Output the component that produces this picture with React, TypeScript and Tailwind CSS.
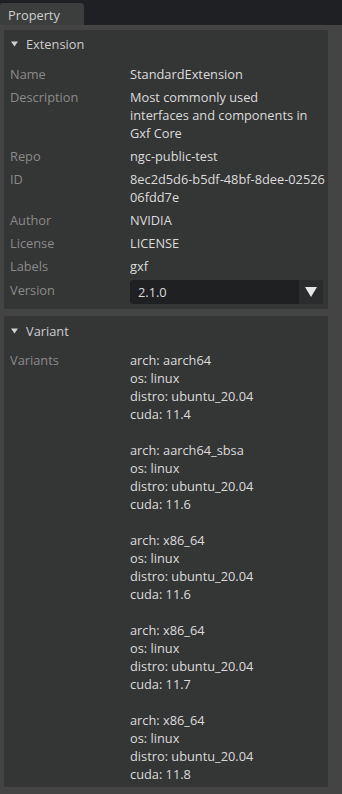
const rows: { label: string; value: string[] }[] = [
  { label: "Name", value: ["StandardExtension"] },
  { label: "Description", value: ["Most commonly used", "interfaces and components in", "Gxf Core"] },
  { label: "Repo", value: ["ngc-public-test"] },
  { label: "ID", value: ["8ec2d5d6-b5df-48bf-8dee-02526", "06fdd7e"] },
  { label: "Author", value: ["NVIDIA"] },
  { label: "License", value: ["LICENSE"] },
  { label: "Labels", value: ["gxf"] },
];

const variants = [
  { arch: "aarch64", cuda: "11.4" },
  { arch: "aarch64_sbsa", cuda: "11.6" },
  { arch: "x86_64", cuda: "11.6" },
  { arch: "x86_64", cuda: "11.7" },
  { arch: "x86_64", cuda: "11.8" },
];

const Caret = () => (
  <svg width="7" height="6" viewBox="0 0 7 6" className="shrink-0">
    <path d="M0 0.5 H7 L3.5 5.5 Z" fill="#cfcfcf" />
  </svg>
);

const Header = ({ title }: { title: string }) => (
  <div className="flex items-center gap-[8px] pl-[7px] h-[18px] text-[#cdcdcd]">
    <Caret />
    <span>{title}</span>
  </div>
);

export default function App() {
  return (
    <div
      className="w-[342px] h-[794px] bg-[#444444] overflow-hidden text-[12.8px] leading-[18px]"
      style={{ fontFamily: '"Open Sans", "Noto Sans", sans-serif' }}
    >
      <div className="h-[25px] bg-[#1f2023] flex items-end">
        <div className="h-[22px] w-[84px] bg-[#3c3d3d] rounded-tr-[4px] rounded-tl-[2px] pl-[8px] pt-[2px] flex items-center text-[#cfcfcf]">
          Property
        </div>
      </div>

      <div className="pl-[4px] pr-[14px] pt-[5px] flex flex-col gap-[7px]">
        {/* Extension */}
        <div className="bg-[#343535] rounded-[2px] pt-[5px] pb-[5px]">
          <Header title="Extension" />
          <div className="mt-[12px] flex flex-col gap-[5px]">
            {rows.map((r) => (
              <div key={r.label} className="flex">
                <div className="w-[126px] pl-[6px] text-[#8b8b8b] shrink-0">{r.label}</div>
                <div className="text-[#dcdcdc] whitespace-nowrap">
                  {r.value.map((v, i) => (
                    <div key={i}>{v}</div>
                  ))}
                </div>
              </div>
            ))}
            <div className="flex items-start">
              <div className="w-[126px] pl-[6px] pt-[1px] text-[#8b8b8b] shrink-0">Version</div>
              <div className="flex h-[24px] w-[193px] rounded-[3px] overflow-hidden bg-[#1f2022]">
                <div className="flex-1 flex items-center pl-[8px] text-[#dcdcdc]">2.1.0</div>
                <div className="w-[24px] bg-[#2b2c2d] flex items-center justify-center">
                  <svg width="12" height="10" viewBox="0 0 12 10">
                    <path d="M0 0 H12 L6 10 Z" fill="#e6e6e6" />
                  </svg>
                </div>
              </div>
            </div>
          </div>
        </div>

        {/* Variant */}
        <div className="bg-[#343535] rounded-[2px] pt-[6px] pb-[4px]">
          <Header title="Variant" />
          <div className="mt-[11px] flex">
            <div className="w-[126px] pl-[6px] text-[#8b8b8b] shrink-0">Variants</div>
            <div className="text-[#dcdcdc] whitespace-nowrap flex flex-col gap-[18px]">
              {variants.map((v, i) => (
                <div key={i}>
                  <div>arch: {v.arch}</div>
                  <div>os: linux</div>
                  <div>distro: ubuntu_20.04</div>
                  <div>cuda: {v.cuda}</div>
                </div>
              ))}
            </div>
          </div>
        </div>
      </div>
    </div>
  );
}
